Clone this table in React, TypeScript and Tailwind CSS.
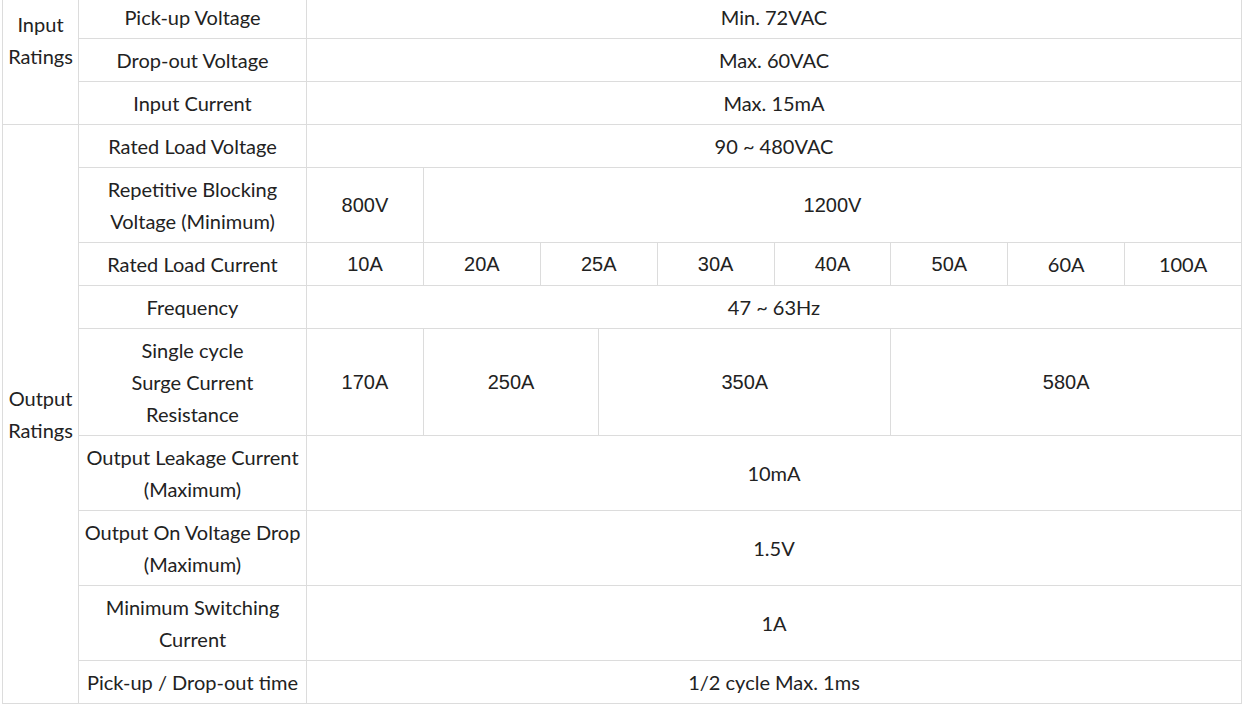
const lato = "font-['Lato','Liberation_Sans',sans-serif]";
const arial = "font-['Liberation_Sans','Arial',sans-serif]";

type CellProps = {
    children: React.ReactNode;
    className?: string;
    font?: string;
};

function Cell({ children, className = "", font = lato }: CellProps) {
    return (
        <div
            className={`flex items-center justify-center bg-white px-1 py-[5px] text-center leading-[32px] ${font} ${className}`}
        >
            <div>{children}</div>
        </div>
    );
}

const loadCurrents = ["10A", "20A", "25A", "30A", "40A", "50A", "60A", "100A"];

export default function App() {
    return (
        <div className="min-h-screen overflow-hidden bg-white">
            <div className="ml-[2px] -mt-[5px] w-[1240px] bg-[#dcdcdc] p-px text-[20px] text-[#222]">
                <div className="grid grid-cols-[75px_227px_repeat(16,minmax(0,1fr))] gap-px">
                    {/* input ratings */}
                    <div className={`row-span-3 bg-white pt-[12px] text-center leading-[32px] ${lato}`}>
                        Input
                        <br />
                        Ratings
                    </div>
                    <Cell>Pick-up Voltage</Cell>
                    <Cell className="col-span-16">Min. 72VAC</Cell>
                    <Cell>Drop-out Voltage</Cell>
                    <Cell className="col-span-16">Max. 60VAC</Cell>
                    <Cell>Input Current</Cell>
                    <Cell className="col-span-16">Max. 15mA</Cell>

                    {/* output ratings */}
                    <Cell className="row-span-9">
                        Output
                        <br />
                        Ratings
                    </Cell>
                    <Cell>Rated Load Voltage</Cell>
                    <Cell className="col-span-16">90 ~ 480VAC</Cell>

                    <Cell>
                        Repetitive Blocking
                        <br />
                        Voltage (Minimum)
                    </Cell>
                    <Cell className="col-span-2" font={arial}>800V</Cell>
                    <Cell className="col-span-14" font={arial}>1200V</Cell>

                    <Cell>Rated Load Current</Cell>
                    {loadCurrents.map((v, i) => (
                        <Cell key={v} className="col-span-2" font={i < 6 ? arial : lato}>
                            {v}
                        </Cell>
                    ))}

                    <Cell>Frequency</Cell>
                    <Cell className="col-span-16">47 ~ 63Hz</Cell>

                    <Cell>
                        Single cycle
                        <br />
                        Surge Current
                        <br />
                        Resistance
                    </Cell>
                    <Cell className="col-span-2" font={arial}>170A</Cell>
                    <Cell className="col-span-3" font={arial}>250A</Cell>
                    <Cell className="col-span-5" font={arial}>350A</Cell>
                    <Cell className="col-span-6" font={arial}>580A</Cell>

                    <Cell>
                        Output Leakage Current
                        <br />
                        (Maximum)
                    </Cell>
                    <Cell className="col-span-16">10mA</Cell>

                    <Cell>
                        Output On Voltage Drop
                        <br />
                        (Maximum)
                    </Cell>
                    <Cell className="col-span-16">1.5V</Cell>

                    <Cell>
                        Minimum Switching
                        <br />
                        Current
                    </Cell>
                    <Cell className="col-span-16">1A</Cell>

                    <Cell>Pick-up / Drop-out time</Cell>
                    <Cell className="col-span-16">1/2 cycle Max. 1ms</Cell>
                </div>
            </div>
        </div>
    );
}
